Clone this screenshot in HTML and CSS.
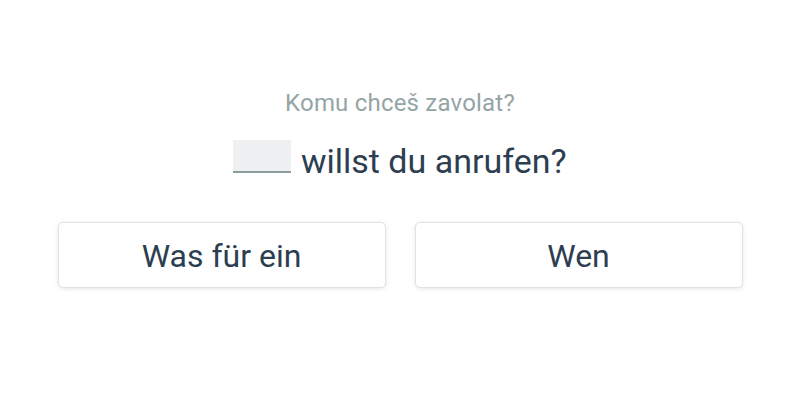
FILE: index.html
```html
<!DOCTYPE html>
<html lang="de">
<head>
<meta charset="utf-8">
<link rel="stylesheet" href="styles.css">
</head>
<body>
<main class="page">
  <p class="hint">Komu chceš zavolat?</p>
  <p class="sentence"><span class="blank"></span> willst du anrufen?</p>
  <div class="choices">
    <button class="choice">Was für ein</button>
    <button class="choice">Wen</button>
  </div>
</main>
</body>
</html>
```
FILE: styles.css
```css
html, body {
  margin: 0;
  padding: 0;
  background: #ffffff;
}
body {
  font-family: Roboto, "Noto Sans", sans-serif;
  width: 800px;
  height: 400px;
}
.page {
  display: flex;
  flex-direction: column;
  align-items: center;
  padding-top: 89px;
}
.hint {
  margin: 0;
  font-size: 24px;
  line-height: 28px;
  letter-spacing: 0.2px;
  color: #95a5a6;
}
.sentence {
  margin: 23px 0 0;
  font-size: 34px;
  line-height: 40px;
  color: #2c3e50;
}
.blank {
  display: inline-block;
  width: 58px;
  height: 31px;
  background: #eef0f2;
  border-bottom: 2px solid #8d9d9e;
  margin-right: 1px;
}
.choices {
  margin-top: 41px;
  display: flex;
  gap: 29px;
}
.choice {
  width: 328px;
  height: 66px;
  background: #ffffff;
  border: 1px solid #e1e1e1;
  border-radius: 5px;
  box-shadow: 0 1px 4px rgba(0, 0, 0, 0.1);
  font-family: Roboto, "Noto Sans", sans-serif;
  font-size: 32px;
  color: #2c3e50;
  padding: 2px 0 0;
}
```
